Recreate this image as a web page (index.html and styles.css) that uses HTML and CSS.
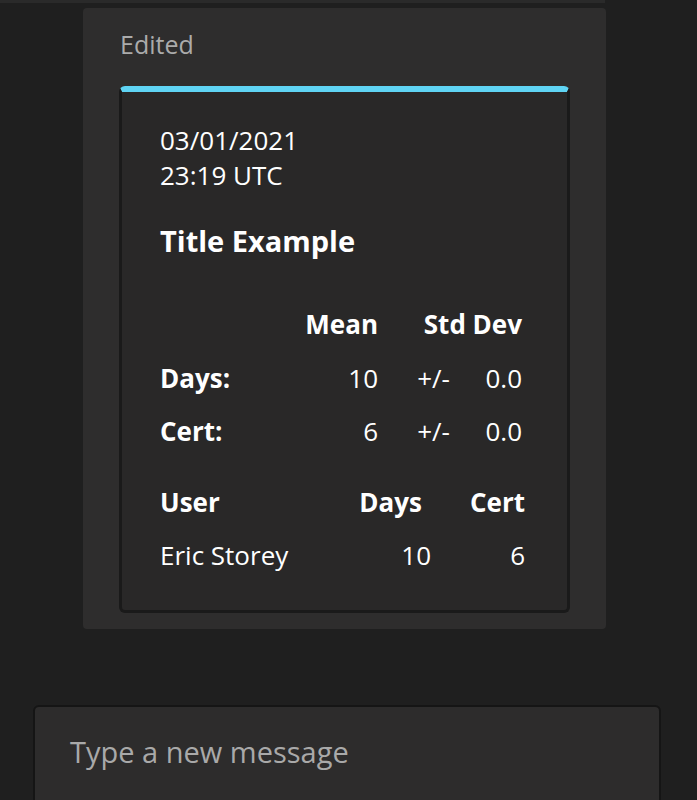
FILE: index.html
```html
<!DOCTYPE html>
<html lang="en">
<head>
<meta charset="utf-8">
<title>Message</title>
<link rel="stylesheet" href="styles.css">
</head>
<body>
<div class="top-strip"></div>
<div class="bubble">
  <div class="edited">Edited</div>
  <div class="card">
    <div class="date">
      <div>03/01/2021</div>
      <div>23:19 UTC</div>
    </div>
    <div class="title">Title Example</div>
    <div class="stats">
      <div></div>
      <div class="num b">Mean</div>
      <div class="num b span2">Std Dev</div>
      <div class="b">Days:</div>
      <div class="num">10</div>
      <div class="num">+/-</div>
      <div class="num">0.0</div>
      <div class="b">Cert:</div>
      <div class="num">6</div>
      <div class="num">+/-</div>
      <div class="num">0.0</div>
    </div>
    <div class="users">
      <div class="urow head">
        <div class="b">User</div>
        <div class="num b">Days</div>
        <div class="num b">Cert</div>
      </div>
      <div class="urow data">
        <div>Eric Storey</div>
        <div class="num">10</div>
        <div class="num">6</div>
      </div>
    </div>
  </div>
</div>
<div class="compose">
  <div class="placeholder">Type a new message</div>
</div>
</body>
</html>
```
FILE: styles.css
```css
html, body {
  margin: 0;
  padding: 0;
  background: #1f1f1f;
  height: 100%;
  overflow: hidden;
}
body {
  font-family: "Open Sans", "Noto Sans", sans-serif;
  color: #ffffff;
  font-size: 26px;
}
.top-strip {
  width: 605px;
  height: 3px;
  background: #2a2a2a;
  margin-bottom: 5px;
}
.bubble {
  margin-left: 83px;
  width: 523px;
  box-sizing: border-box;
  background: #2e2d2d;
  border-radius: 4px;
  padding: 22px 36px 16px 36px;
}
.edited {
  color: #ababab;
  font-size: 25px;
  line-height: 28px;
  padding-left: 1px;
  margin-bottom: 28px;
}
.card {
  background: #292828;
  border: 3px solid #1a1a1a;
  border-top: 6px solid #5fd4f4;
  border-radius: 6px;
  padding: 31px 42px 37px 38px;
}
.date {
  line-height: 35px;
}
.title {
  font-size: 29px;
  font-weight: 700;
  line-height: 40px;
  margin-top: 28px;
}
.stats {
  margin-top: 46px;
  display: grid;
  grid-template-columns: 130px 88px 72px 72px;
  row-gap: 18.5px;
  line-height: 35px;
}
.span2 {
  grid-column: span 2;
}
.b {
  font-weight: 700;
}
.num {
  text-align: right;
}
.users {
  margin-top: 36px;
  display: flex;
  flex-direction: column;
  gap: 18px;
  line-height: 35px;
}
.urow {
  display: grid;
}
.urow.head {
  grid-template-columns: 1fr 100px 103px;
}
.urow.data {
  grid-template-columns: 1fr 100px 94px;
}
.compose {
  margin: 76px 0 0 33px;
  width: 628px;
  height: 110px;
  box-sizing: border-box;
  background: #2d2c2c;
  border: 2px solid #151515;
  border-radius: 6px;
  padding: 26px 0 0 35px;
}
.placeholder {
  color: #a9a9a9;
  font-size: 29px;
  line-height: 38px;
}
```
